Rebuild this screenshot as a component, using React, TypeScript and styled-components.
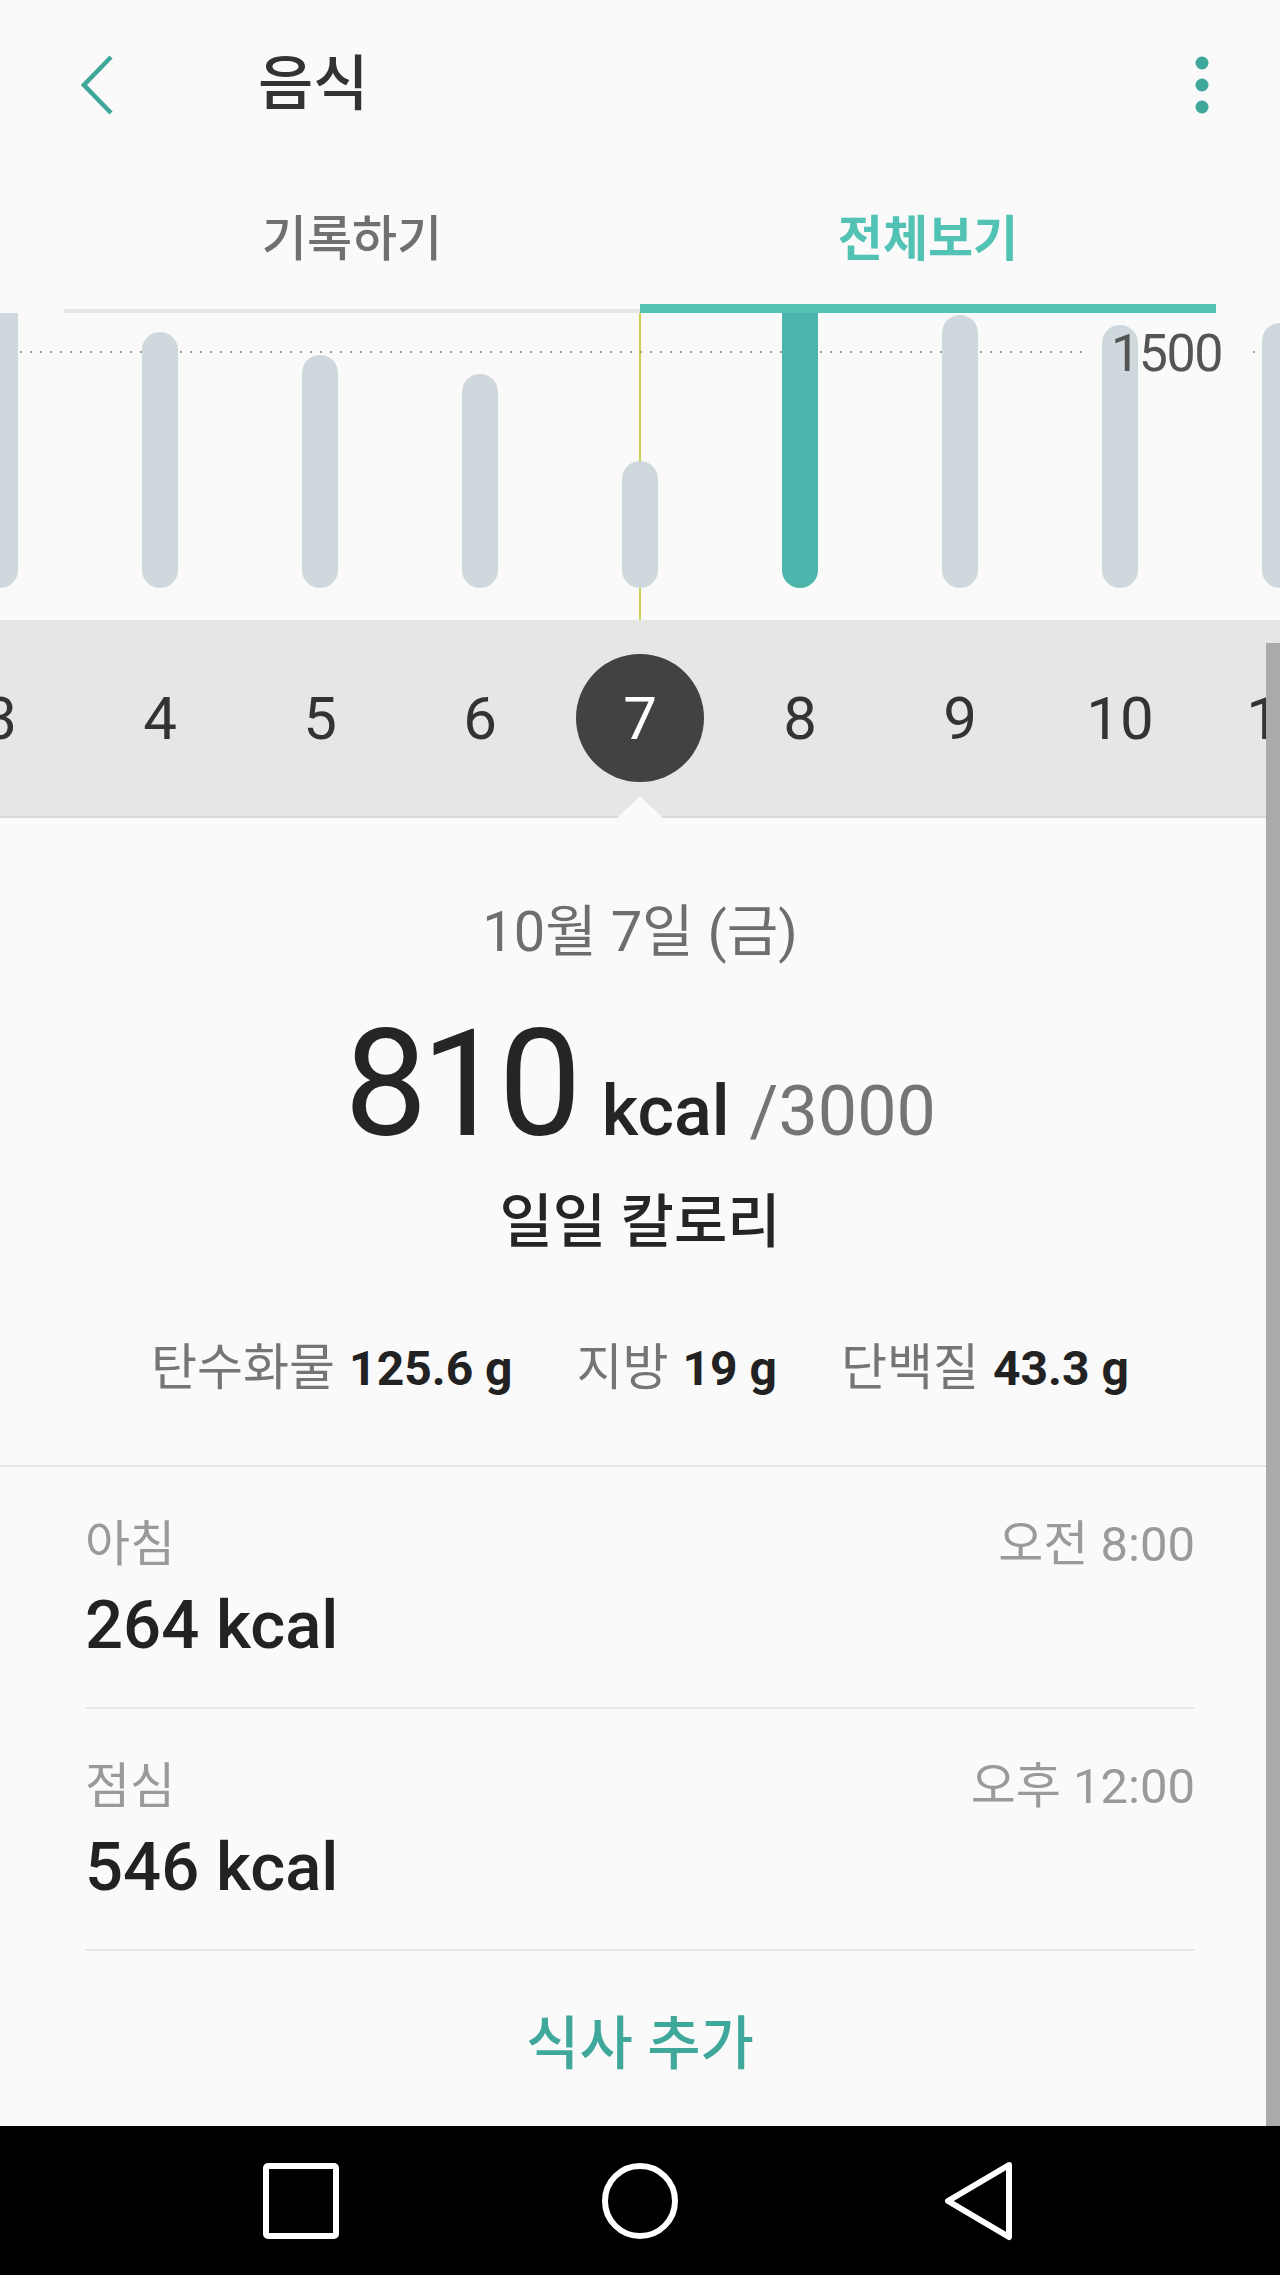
import React from 'react';
import styled, { createGlobalStyle } from 'styled-components';

const GlobalStyle = createGlobalStyle`
  html, body { margin: 0; padding: 0; background: #fafafa; }
  body { font-family: Roboto, "Noto Sans CJK KR", sans-serif; }
  * { box-sizing: border-box; }
`;

const TEAL = '#3fa89b';
const TEAL_LIGHT = '#52c2b5';

const Screen = styled.div`
  position: relative;
  width: 1280px;
  height: 2275px;
  overflow: hidden;
  background: #fafafa;
  display: flex;
  flex-direction: column;
`;

const AppBar = styled.header`
  height: 170px;
  display: flex;
  align-items: center;
  padding: 0 58px 0 81px;
`;

const IconButton = styled.button`
  display: flex;
  align-items: center;
  justify-content: center;
  background: none;
  border: none;
  padding: 0;
  cursor: pointer;
`;

const BackButton = styled(IconButton)`
  width: 32px;
  height: 60px;
  margin-right: 145px;
`;

const Title = styled.h1`
  flex: 1;
  margin: 0;
  font-size: 60px;
  line-height: 1;
  font-weight: 500;
  color: #333;
`;

const MoreButton = styled(IconButton)`
  width: 40px;
  height: 60px;
`;

const Tabs = styled.nav`
  display: flex;
  height: 143px;
  margin: 0 64px;
`;

const Tab = styled.div`
  flex: 1;
  display: flex;
  flex-direction: column;
  align-items: center;
`;

const TabLabel = styled.span<{ $active?: boolean }>`
  margin-top: 40px;
  height: 60px;
  line-height: 60px;
  font-size: 49px;
  font-weight: ${(p) => (p.$active ? 700 : 500)};
  color: ${(p) => (p.$active ? TEAL_LIGHT : '#707070')};
`;

const TabLine = styled.div<{ $active?: boolean }>`
  margin-top: auto;
  align-self: stretch;
  height: ${(p) => (p.$active ? 9 : 4)}px;
  background: ${(p) => (p.$active ? TEAL_LIGHT : '#e8e8e8')};
`;

const Chart = styled.svg`
  display: block;
  width: 1280px;
  height: 307px;
`;

const DateStrip = styled.div`
  position: relative;
  height: 198px;
  background: #e6e6e6;
  border-bottom: 2px solid #d9d9d9;
  &::after {
    content: '';
    position: absolute;
    left: 617px;
    bottom: -2px;
    width: 46px;
    height: 22px;
    background: #fafafa;
    clip-path: polygon(50% 0, 100% 100%, 0 100%);
  }
`;

const DayTrack = styled.div`
  display: flex;
  width: 1440px;
  height: 100%;
  margin-left: -80px;
`;

const DayCell = styled.div`
  width: 160px;
  display: flex;
  align-items: center;
  justify-content: center;
`;

const DayNum = styled.span<{ $selected?: boolean }>`
  width: 128px;
  height: 128px;
  border-radius: 50%;
  display: flex;
  align-items: center;
  justify-content: center;
  font-size: 60px;
  font-weight: 400;
  color: ${(p) => (p.$selected ? '#ffffff' : '#333333')};
  background: ${(p) => (p.$selected ? '#424242' : 'transparent')};
`;

const Summary = styled.section`
  height: 649px;
  display: flex;
  flex-direction: column;
  align-items: center;
  padding-top: 79px;
  border-bottom: 2px solid #e4e4e4;
`;

const DateText = styled.div`
  font-size: 56px;
  line-height: 70px;
  color: #6e6e6e;
`;

const CalorieRow = styled.div`
  display: flex;
  align-items: baseline;
  margin-top: 44px;
`;

const BigNumber = styled.span`
  font-size: 148px;
  line-height: 148px;
  letter-spacing: -6px;
  color: #252525;
  margin-right: 26px;
`;

const Unit = styled.span`
  font-size: 70px;
  line-height: 70px;
  font-weight: 500;
  color: #252525;
  margin-right: 20px;
`;

const Goal = styled.span`
  font-size: 70px;
  line-height: 70px;
  color: #757575;
`;

const CalorieLabel = styled.div`
  margin-top: 31px;
  font-size: 58px;
  line-height: 64px;
  font-weight: 500;
  color: #252525;
`;

const MacroRow = styled.div`
  display: flex;
  align-items: baseline;
  gap: 64px;
  margin-top: 84px;
  font-size: 50px;
  line-height: 60px;
`;

const Macro = styled.div`
  display: flex;
  align-items: baseline;
  gap: 14px;
`;

const MacroName = styled.span`
  color: #757575;
`;

const MacroValue = styled.span`
  font-size: 48px;
  font-weight: 700;
  color: #222;
`;

const MealList = styled.div`
  padding: 0 85px;
`;

const MealRow = styled.div`
  height: 242px;
  padding-top: 48px;
  border-bottom: 2px solid #e8e8e8;
`;

const MealHead = styled.div`
  display: flex;
  justify-content: space-between;
  font-size: 49px;
  line-height: 60px;
  color: #9a9a9a;
`;

const MealKcal = styled.div`
  margin-top: 10px;
  font-size: 67px;
  line-height: 80px;
  font-weight: 500;
  color: #222;
`;

const AddMeal = styled.button`
  height: 175px;
  width: 100%;
  display: flex;
  align-items: center;
  justify-content: center;
  background: none;
  border: none;
  font-family: Roboto, "Noto Sans CJK KR", sans-serif;
  font-size: 58px;
  font-weight: 500;
  color: ${TEAL};
  cursor: pointer;
`;

const NavBar = styled.footer`
  height: 149px;
  background: #000;
  display: flex;
  align-items: center;
  justify-content: center;
  gap: 239px;
`;

const NavButton = styled(IconButton)`
  width: 100px;
  height: 100px;
`;

const ScrollThumb = styled.div`
  position: absolute;
  top: 643px;
  right: 0;
  width: 14px;
  height: 1483px;
  background: #aaaaaa;
`;

const bars = [
  { d: 3, top: -20 },
  { d: 4, top: 19 },
  { d: 5, top: 42 },
  { d: 6, top: 61 },
  { d: 7, top: 148 },
  { d: 8, top: -20, active: true },
  { d: 9, top: 2 },
  { d: 10, top: 12 },
  { d: 11, top: 10 },
];

const meals = [
  { name: '아침', time: '오전 8:00', kcal: '264 kcal' },
  { name: '점심', time: '오후 12:00', kcal: '546 kcal' },
];

const macros = [
  { name: '탄수화물', value: '125.6 g' },
  { name: '지방', value: '19 g' },
  { name: '단백질', value: '43.3 g' },
];

export default function App() {
  return (
    <Screen>
      <GlobalStyle />
      <AppBar>
        <BackButton aria-label="back">
          <svg width="32" height="60" viewBox="0 0 32 60">
            <polyline points="30,2 3,30 30,58" fill="none" stroke={TEAL} strokeWidth="4.5" />
          </svg>
        </BackButton>
        <Title>음식</Title>
        <MoreButton aria-label="more">
          <svg width="40" height="60" viewBox="0 0 40 60">
            <circle cx="20" cy="8" r="6.5" fill={TEAL} />
            <circle cx="20" cy="30" r="6.5" fill={TEAL} />
            <circle cx="20" cy="52" r="6.5" fill={TEAL} />
          </svg>
        </MoreButton>
      </AppBar>

      <Tabs>
        <Tab>
          <TabLabel>기록하기</TabLabel>
          <TabLine />
        </Tab>
        <Tab>
          <TabLabel $active>전체보기</TabLabel>
          <TabLine $active />
        </Tab>
      </Tabs>

      <Chart viewBox="0 0 1280 307">
        <line x1="0" y1="39" x2="1082" y2="39" stroke="#9e9e9e" strokeWidth="2" strokeDasharray="2 8" />
        <line x1="1253" y1="39" x2="1280" y2="39" stroke="#9e9e9e" strokeWidth="2" strokeDasharray="2 8" />
        <line x1="640" y1="0" x2="640" y2="307" stroke="#bfc21c" strokeWidth="1.5" />
        {bars.map((b) => {
          const cx = 640 + (b.d - 7) * 160;
          return (
            <rect
              key={b.d}
              x={cx - 18}
              y={b.top}
              width={36}
              height={275 - b.top}
              rx={18}
              fill={b.active ? '#4db6ac' : '#cfd8dc'}
            />
          );
        })}
        <text
          x="1222"
          y="58"
          textAnchor="end"
          fontSize="52"
          letterSpacing="-1.5"
          fill="#555555"
          fontFamily="Roboto, sans-serif"
        >
          1500
        </text>
      </Chart>

      <DateStrip>
        <DayTrack>
          {bars.map((b) => (
            <DayCell key={b.d}>
              <DayNum $selected={b.d === 7}>{b.d}</DayNum>
            </DayCell>
          ))}
        </DayTrack>
      </DateStrip>

      <Summary>
        <DateText>10월 7일 (금)</DateText>
        <CalorieRow>
          <BigNumber>810</BigNumber>
          <Unit>kcal</Unit>
          <Goal>/3000</Goal>
        </CalorieRow>
        <CalorieLabel>일일 칼로리</CalorieLabel>
        <MacroRow>
          {macros.map((m) => (
            <Macro key={m.name}>
              <MacroName>{m.name}</MacroName>
              <MacroValue>{m.value}</MacroValue>
            </Macro>
          ))}
        </MacroRow>
      </Summary>

      <MealList>
        {meals.map((m) => (
          <MealRow key={m.name}>
            <MealHead>
              <span>{m.name}</span>
              <span>{m.time}</span>
            </MealHead>
            <MealKcal>{m.kcal}</MealKcal>
          </MealRow>
        ))}
      </MealList>
      <AddMeal>식사 추가</AddMeal>

      <NavBar>
        <NavButton aria-label="recent">
          <svg width="78" height="78" viewBox="0 0 78 78">
            <rect x="4" y="4" width="70" height="70" rx="2" fill="none" stroke="#fff" strokeWidth="6" />
          </svg>
        </NavButton>
        <NavButton aria-label="home">
          <svg width="78" height="78" viewBox="0 0 78 78">
            <circle cx="39" cy="39" r="35" fill="none" stroke="#fff" strokeWidth="6" />
          </svg>
        </NavButton>
        <NavButton aria-label="back">
          <svg width="72" height="80" viewBox="0 0 72 80">
            <polygon points="66,4 5,40 66,76" fill="none" stroke="#fff" strokeWidth="6" strokeLinejoin="round" />
          </svg>
        </NavButton>
      </NavBar>
      <ScrollThumb />
    </Screen>
  );
}
